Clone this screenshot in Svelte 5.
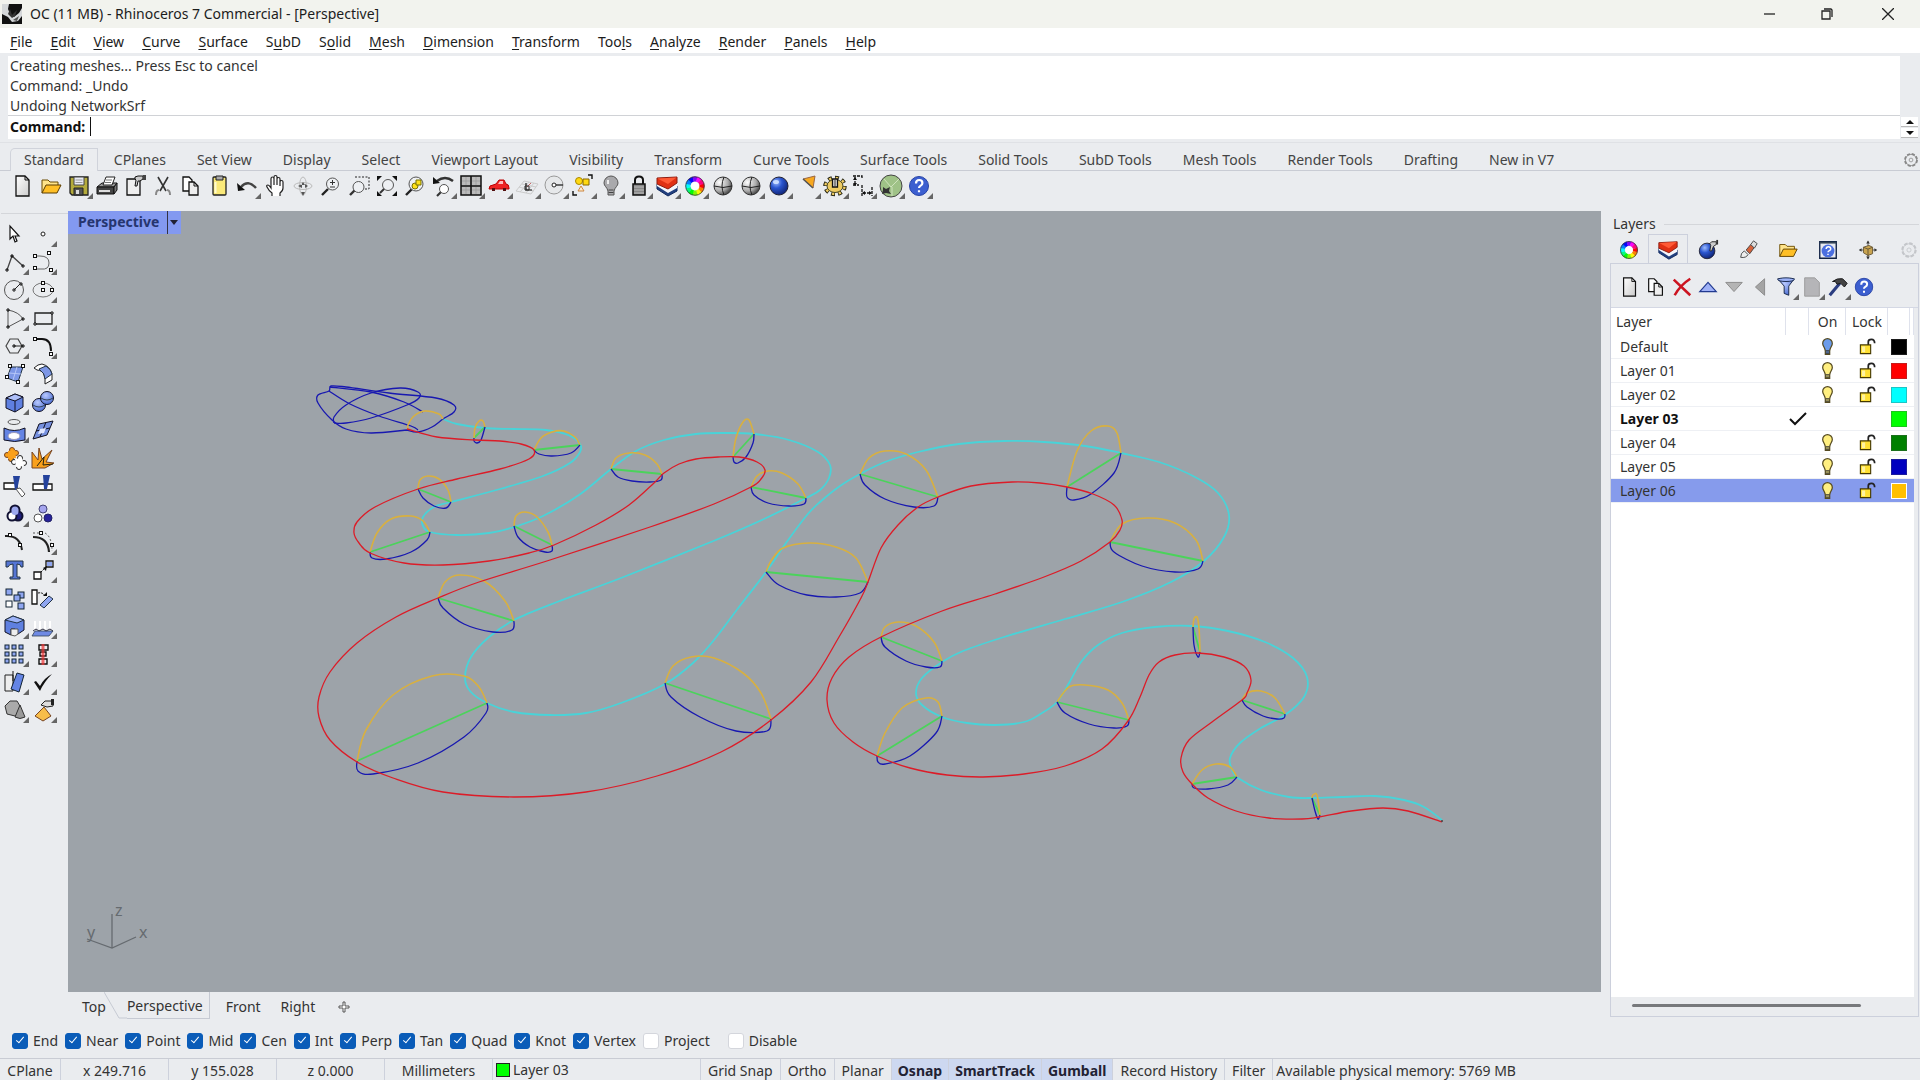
<script lang="ts">
	type Point = [number, number];

	interface Section {
		top: Point[];
		bottom: Point[];
	}

	interface Layer {
		name: string;
		color: string;
		bulb: string | null;
		current?: boolean;
	}

	const menus = [
		['', 'F', 'ile'],
		['', 'E', 'dit'],
		['', 'V', 'iew'],
		['', 'C', 'urve'],
		['', 'S', 'urface'],
		['S', 'u', 'bD'],
		['S', 'o', 'lid'],
		['', 'M', 'esh'],
		['', 'D', 'imension'],
		['', 'T', 'ransform'],
		['Too', 'l', 's'],
		['', 'A', 'nalyze'],
		['', 'R', 'ender'],
		['', 'P', 'anels'],
		['', 'H', 'elp']
	];

	const history = ['Creating meshes... Press Esc to cancel', 'Command: _Undo', 'Undoing NetworkSrf'];

	const toolTabs = [
		'Standard', 'CPlanes', 'Set View', 'Display', 'Select', 'Viewport Layout', 'Visibility', 'Transform',
		'Curve Tools', 'Surface Tools', 'Solid Tools', 'SubD Tools', 'Mesh Tools', 'Render Tools', 'Drafting', 'New in V7'
	];

	// names ending in + carry a flyout corner
	const standardTools = [
		'new', 'open', 'save+', 'print', 'properties', 'cut', 'copy', 'paste', 'undo+', 'pan', 'rotate',
		'zoom', 'zoomWindow', 'zoomExtents', 'zoomSelected', 'zoomUndo+', 'fourViews+', 'car+', 'cplane+',
		'disc+', 'select+', 'bulbGrey+', 'lock+', 'layers+', 'wheel+', 'wireSphere', 'wireSphere+',
		'renderSphere+', 'spot+', 'gear+', 'dims+', 'grass+', 'help+'
	];

	const sideTools = [
		'arrow', 'point+', 'polyline+', 'curve+', 'circle+', 'ellipse+', 'arc+', 'rect+', 'polygon+', 'fillet+',
		'surface+', 'sweep+', 'box+', 'spheres+', 'extrude+', 'patch+', 'puzzle', 'explode', 'trim', 'split',
		'union+', 'group', 'editPts', 'blend+', 'text', 'move+', 'copies', 'rotate2d', 'solidEdit+', 'flow+',
		'array+', 'align+', 'mirror+', 'check+', 'prims+', 'drape+'
	];

	const panelTabs = ['wheel', 'layers', 'renderBall', 'brush', 'open', 'helpBox', 'gumball'];
	const panelTools = ['new', 'copy', 'remove', 'up', 'down', 'back', 'filter', 'sheet', 'hammer', 'help'];

	const layers: Layer[] = [
		{ name: 'Default', color: '#000000', bulb: '#6b9bea' },
		{ name: 'Layer 01', color: '#ff0000', bulb: '#ffef80' },
		{ name: 'Layer 02', color: '#00ffff', bulb: '#ffef80' },
		{ name: 'Layer 03', color: '#00ff00', bulb: null, current: true },
		{ name: 'Layer 04', color: '#008000', bulb: '#ffef80' },
		{ name: 'Layer 05', color: '#0000bf', bulb: '#ffef80' },
		{ name: 'Layer 06', color: '#ffbf00', bulb: '#ffef80' }
	];

	let selected = $state('Layer 06');

	let snaps = $state([
		{ name: 'End', on: true },
		{ name: 'Near', on: true },
		{ name: 'Point', on: true },
		{ name: 'Mid', on: true },
		{ name: 'Cen', on: true },
		{ name: 'Int', on: true },
		{ name: 'Perp', on: true },
		{ name: 'Tan', on: true },
		{ name: 'Quad', on: true },
		{ name: 'Knot', on: true },
		{ name: 'Vertex', on: true },
		{ name: 'Project', on: false },
		{ name: 'Disable', on: false }
	]);

	const modes = [
		{ name: 'Grid Snap', on: false },
		{ name: 'Ortho', on: false },
		{ name: 'Planar', on: false },
		{ name: 'Osnap', on: true },
		{ name: 'SmartTrack', on: true },
		{ name: 'Gumball', on: true },
		{ name: 'Record History', on: false },
		{ name: 'Filter', on: false }
	];

	// Catmull-Rom through the points, written as cubic Beziers
	function smooth(pts: Point[]) {
		let d = `M${pts[0][0]} ${pts[0][1]}`;
		for (let i = 0; i < pts.length - 1; i++) {
			const a = pts[Math.max(i - 1, 0)];
			const b = pts[i];
			const c = pts[i + 1];
			const e = pts[Math.min(i + 2, pts.length - 1)];
			d += `C${b[0] + (c[0] - a[0]) / 6} ${b[1] + (c[1] - a[1]) / 6} ${c[0] - (e[0] - b[0]) / 6} ${c[1] - (e[1] - b[1]) / 6} ${c[0]} ${c[1]}`;
		}
		return d;
	}

	const redRail: Point[] = [
		[407, 429], [437, 437], [475, 440], [500, 441], [521, 444], [534, 450], [529, 459], [500, 469], [457, 479],
		[418, 489], [375, 507], [357, 522], [354, 533], [359, 543], [370, 553], [404, 563], [443, 565], [489, 561],
		[529, 553], [554, 545], [596, 525], [629, 505], [654, 483], [664, 473], [679, 464], [696, 459], [718, 457],
		[739, 457], [757, 462], [765, 470], [761, 479], [751, 487], [714, 504], [650, 527], [550, 560], [479, 582],
		[438, 598], [396, 617], [357, 643], [330, 672], [319, 697], [319, 717], [330, 740], [357, 762], [393, 778],
		[443, 792], [514, 797], [586, 792], [657, 776], [721, 752], [771, 720], [811, 682], [839, 637], [861, 598],
		[868, 582], [881, 548], [898, 525], [918, 507], [938, 497], [971, 486], [1012, 482], [1040, 483], [1067, 487],
		[1093, 494], [1114, 505], [1122, 520], [1120, 530], [1110, 542], [1081, 561], [1044, 577], [995, 594],
		[942, 611], [881, 637], [849, 657], [832, 678], [827, 700], [834, 723], [853, 742], [877, 756], [910, 768],
		[947, 775], [983, 777], [1024, 774], [1065, 766], [1102, 749], [1128, 721], [1140, 697], [1149, 675],
		[1159, 662], [1175, 655], [1198, 653], [1224, 657], [1244, 666], [1251, 680], [1247, 693], [1242, 700],
		[1212, 722], [1189, 740], [1181, 758], [1183, 772], [1192, 784], [1208, 798], [1236, 811], [1269, 818],
		[1302, 819], [1319, 817], [1351, 811], [1383, 808], [1408, 811], [1442, 822]
	];

	const cyanRail: Point[] = [
		[443, 419], [457, 424], [484, 428], [514, 429], [546, 430], [568, 435], [580, 444], [580, 452], [570, 463],
		[543, 476], [500, 489], [451, 502], [434, 507], [423, 517], [423, 526], [430, 532], [457, 535], [489, 533],
		[514, 527], [543, 516], [579, 495], [611, 469], [636, 451], [664, 440], [696, 434], [725, 433], [754, 434],
		[789, 440], [818, 452], [830, 465], [829, 478], [820, 490], [806, 498], [764, 519], [711, 542], [621, 578],
		[557, 602], [514, 620], [489, 637], [471, 657], [465, 677], [470, 691], [487, 703], [514, 712], [550, 715],
		[586, 713], [621, 703], [665, 684], [693, 663], [714, 640], [739, 607], [766, 572], [786, 543], [807, 515],
		[820, 502], [840, 486], [860, 474], [885, 462], [918, 452], [959, 444], [1004, 441], [1044, 442], [1085, 446],
		[1121, 453], [1159, 462], [1195, 477], [1218, 493], [1229, 515], [1224, 537], [1204, 561], [1171, 582],
		[1122, 602], [1065, 619], [1004, 637], [963, 651], [942, 662], [922, 678], [916, 693], [922, 705], [942, 717],
		[967, 723], [995, 725], [1024, 722], [1042, 713], [1057, 702], [1069, 683], [1081, 662], [1098, 645],
		[1122, 633], [1155, 627], [1193, 626], [1228, 631], [1265, 642], [1293, 658], [1307, 677], [1304, 697],
		[1285, 715], [1261, 728], [1240, 743], [1230, 758], [1232, 770], [1238, 778], [1261, 790], [1289, 797],
		[1312, 798], [1342, 797], [1375, 796], [1404, 800], [1424, 807], [1442, 820]
	];

	// each top runs left rail to right rail; each bottom does the same underneath
	const sections: Section[] = [
		{ top: [[474, 438], [475, 428], [479, 421], [483, 421], [485, 427]], bottom: [[474, 438], [474, 441], [477, 443], [481, 440], [485, 427]] },
		{ top: [[534, 450], [541, 438], [552, 432], [564, 431], [575, 437], [580, 445]], bottom: [[534, 450], [539, 454], [552, 456], [571, 453], [580, 445]] },
		{ top: [[418, 489], [420, 480], [428, 476], [439, 479], [448, 490], [451, 502]], bottom: [[418, 489], [423, 498], [434, 506], [446, 508], [451, 502]] },
		{ top: [[370, 552], [377, 533], [391, 519], [411, 516], [423, 521], [430, 532]], bottom: [[370, 552], [372, 558], [386, 559], [411, 552], [427, 540], [430, 532]] },
		{ top: [[514, 526], [516, 516], [525, 512], [537, 517], [548, 532], [552, 545]], bottom: [[514, 526], [518, 537], [530, 547], [545, 552], [552, 551], [552, 545]] },
		{ top: [[611, 469], [616, 458], [629, 453], [645, 455], [657, 464], [662, 474]], bottom: [[611, 469], [618, 477], [632, 481], [650, 482], [661, 480], [662, 474]] },
		{ top: [[733, 457], [736, 438], [743, 422], [749, 420], [754, 434]], bottom: [[733, 457], [734, 462], [738, 463], [746, 457], [753, 443], [754, 434]] },
		{ top: [[751, 487], [757, 476], [768, 471], [782, 473], [798, 484], [806, 498]], bottom: [[751, 487], [754, 495], [768, 503], [789, 506], [804, 504], [806, 498]] },
		{ top: [[438, 598], [445, 582], [459, 575], [484, 581], [505, 601], [514, 621]], bottom: [[438, 598], [443, 608], [464, 624], [493, 632], [512, 630], [514, 621]] },
		{ top: [[357, 761], [366, 730], [393, 695], [432, 676], [464, 676], [479, 687], [487, 703]], bottom: [[357, 761], [358, 771], [373, 774], [418, 763], [464, 737], [486, 713], [487, 703]] },
		{ top: [[665, 683], [673, 666], [691, 657], [714, 658], [743, 673], [761, 693], [771, 719]], bottom: [[665, 683], [671, 697], [700, 717], [736, 731], [767, 731], [771, 719]] },
		{ top: [[766, 572], [771, 561], [783, 548], [809, 543], [836, 547], [856, 558], [868, 582]], bottom: [[766, 572], [779, 585], [807, 595], [836, 597], [860, 593], [868, 582]] },
		{ top: [[860, 474], [869, 458], [885, 451], [906, 454], [926, 470], [938, 497]], bottom: [[860, 474], [865, 485], [885, 499], [914, 507], [934, 506], [938, 497]] },
		{ top: [[1067, 487], [1077, 451], [1091, 431], [1108, 426], [1117, 433], [1121, 453]], bottom: [[1067, 487], [1067, 497], [1074, 500], [1091, 494], [1114, 473], [1121, 453]] },
		{ top: [[1110, 542], [1122, 524], [1147, 518], [1175, 523], [1196, 540], [1203, 561]], bottom: [[1110, 542], [1114, 552], [1142, 566], [1175, 572], [1198, 569], [1203, 561]] },
		{ top: [[881, 637], [885, 627], [898, 622], [916, 626], [934, 642], [942, 661]], bottom: [[881, 637], [885, 647], [906, 661], [926, 667], [940, 667], [942, 661]] },
		{ top: [[877, 756], [885, 733], [902, 708], [926, 698], [938, 702], [942, 716]], bottom: [[877, 756], [878, 762], [885, 764], [910, 756], [936, 733], [942, 716]] },
		{ top: [[1057, 702], [1069, 687], [1085, 685], [1108, 690], [1122, 703], [1129, 720]], bottom: [[1057, 702], [1065, 713], [1089, 724], [1114, 728], [1127, 726], [1129, 720]] },
		{ top: [[1193, 627], [1194, 619], [1197, 617], [1199, 628], [1200, 652]], bottom: [[1193, 627], [1194, 645], [1198, 657], [1200, 652]] },
		{ top: [[1242, 700], [1247, 693], [1261, 691], [1275, 698], [1285, 714]], bottom: [[1242, 700], [1247, 707], [1263, 716], [1277, 719], [1284, 718], [1285, 714]] },
		{ top: [[1192, 784], [1202, 770], [1216, 764], [1230, 767], [1237, 777]], bottom: [[1192, 784], [1194, 788], [1208, 789], [1228, 785], [1237, 777]] },
		{ top: [[1312, 798], [1313, 795], [1317, 795], [1320, 815]], bottom: [[1312, 798], [1315, 811], [1318, 819], [1320, 815]] }
	];

	const head: Point[][] = [
		[[407, 430], [371, 433], [346, 429], [332, 420], [318, 403], [318, 395], [329, 391], [331, 386], [346, 387], [389, 393], [436, 398], [454, 405], [454, 412], [443, 419], [432, 427], [418, 432], [407, 430]],
		[[329, 391], [350, 404], [379, 416], [411, 426], [418, 430]],
		[[334, 423], [334, 417], [346, 405], [371, 393], [400, 388], [418, 392], [419, 398], [407, 405], [371, 418], [346, 423], [334, 423]],
		[[330, 387], [371, 392], [404, 402], [423, 412]]
	];

	const headTop: Point[] = [[408, 429], [408, 425], [414, 416], [425, 411], [439, 414], [443, 419]];

	function colorWheel() {
		let out = '';
		for (let i = 0; i < 12; i++) {
			const a = (i * Math.PI) / 6 - 0.28;
			const b = a + 0.58;
			out += `<path d="M${12 + 7 * Math.cos(a)} ${12 + 7 * Math.sin(a)}A7 7 0 0 1 ${12 + 7 * Math.cos(b)} ${12 + 7 * Math.sin(b)}" stroke="hsl(${i * 30} 95% 50%)" stroke-width="5"/>`;
		}
		return out + '<circle cx="12" cy="12" r="9.3" stroke="#333" stroke-width=".8"/><circle cx="12" cy="12" r="4" fill="#fff"/>';
	}

	function squares(spots: Point[], fill = '#fff') {
		return spots.map(([x, y]) => `<rect x="${x - 1.5}" y="${y - 1.5}" width="3" height="3" fill="${fill}" stroke="#111"/>`).join('');
	}

	function blocks(spots: Point[], size: number, fill = '#8fa6f0') {
		return spots.map(([x, y]) => `<rect x="${x}" y="${y}" width="${size}" height="${size}" fill="${fill}" stroke="#123"/>`).join('');
	}

	const lens = '<path d="M3 21l6-6" stroke="#222" stroke-width="2.4"/><circle cx="13.5" cy="10" r="6" fill="#eef0f3" stroke="#555"/>';
	const ball = '<circle cx="12" cy="12" r="9" fill="url(#gBlue)" stroke="#223"/>';
	const question = '<path d="M9 9.5q0-3.500 3.200-3.500t3.200 3q0 1.700-1.700 2.600t-1.700 2.400M12 16.200v2" stroke="#fff" stroke-width="2.200"/>';
	const bulbShape = 'M12 3a5.500 5.500 0 0 1 5.500 5.500c0 3-2.500 4.500-3 8.500v4h-5v-4c-.5-4-3-5.500-3-8.500A5.500 5.500 0 0 1 12 3z';

	const icons: Record<string, string> = {
		new: '<path d="M5 2h9l4 4v16H5z" fill="url(#gPaper)" stroke="#111" stroke-width="1.300"/><path d="M14 2v4h4" stroke="#111"/>',
		open: '<path d="M3 19V6h6l2 2h8v3" fill="#ffe48a" stroke="#6a4a00"/><path d="M3 19l4-8h15l-4 8z" fill="#ffbf26" stroke="#5a3c00"/>',
		save: '<path d="M3 3h18v18H5l-2-2z" fill="#b4ab3c" stroke="#222" stroke-width="1.300"/><path d="M7 3h10v8H7z" fill="#e8eaf2" stroke="#444"/><path d="M8.500 6h7M8.500 8.500h7" stroke="#999"/><path d="M7 14h9v7H7z" fill="#555" stroke="#222"/><path d="M9 16h3v4H9z" fill="#ddd"/>',
		print: '<path d="M2 13l5-4h15l-3 4z" fill="#999" stroke="#111"/><path d="M2 13h17v7H2z" fill="#444" stroke="#111"/><path d="M19 13l3-4v7l-3 4z" fill="#777" stroke="#111"/><path d="M8 11l3-8h9l-3 8z" fill="#fff" stroke="#222"/><path d="M4 16h11v2H4z" fill="#ddd"/><path d="M11 6h6M10 8.500h6" stroke="#777"/>',
		properties: '<path d="M4 5h13v16H4z" fill="#eee" stroke="#111" stroke-width="1.300"/><path d="M12 3l3-1h5v3l-3 2h-2l-1 5h-2l1-6-1-1z" fill="#ccc" stroke="#111"/><path d="M20 1h3v5h-3z" fill="#444"/>',
		cut: '<path d="M7 3l8 14M17 3L9 17" stroke="#333" stroke-width="1.600"/><path d="M8 16q-3 0-3 5M16 16q3 0 3 5" stroke="#888" stroke-width="2"/>',
		copy: '<path d="M4 3h6l3 3v11H4z" fill="#fff" stroke="#111" stroke-width="1.300"/><path d="M10 8h5l4 4v9h-9z" fill="#eee" stroke="#111" stroke-width="1.300"/><path d="M15 8v4h4" stroke="#111"/>',
		paste: '<rect x="6" y="3" width="13" height="18" rx="1" fill="#fae979" stroke="#222" stroke-width="1.300"/><path d="M9 2h7v4H9z" fill="#aaa" stroke="#222"/><path d="M8.500 8v11" stroke="#fffbd0" stroke-width="2"/>',
		undo: '<path d="M6 13q7-8 15 1" stroke="#444" stroke-width="2.400"/><path d="M2 9l1 8 7-1z" fill="#111"/>',
		pan: '<path d="M9 22v-3q-3-2-5-6-1-2 1-2 1 0 3 3V5q0-2 1.500-2T11 5v6-8q0-1.500 1.500-1.500T14 3v8-6q0-1.500 1.500-1.500T17 5v7-4q0-1.500 1.500-1.500T20 8v6q0 3-3 5v3" fill="#fff" stroke="#222" stroke-width="1.200"/>',
		rotate: '<ellipse cx="12" cy="12" rx="9" ry="3.500" stroke="#bbb"/><ellipse cx="12" cy="12" rx="3.500" ry="9" stroke="#bbb"/><path d="M12 8l-2 3h4zM12 22l-2-4h4zM7 12l4-2v4zM17 12l-3 2v-4z" fill="#555"/>',
		zoom: lens + '<path d="M11 8.500h5M13.500 6v5M11 13h5" stroke="#333"/>',
		zoomWindow: '<path d="M3 21l5-5" stroke="#333" stroke-width="2.400"/><circle cx="11.500" cy="13" r="5.500" fill="#eef0f3" stroke="#555"/><path d="M8 3h14v12h-4" stroke="#222" stroke-dasharray="2 1.500"/>',
		zoomExtents: '<path d="M2 7V2h5zM17 2h5v5zM2 17v5h5zM22 17v5h-5z" fill="#111"/><path d="M5 19l5-5" stroke="#333" stroke-width="2"/><circle cx="13" cy="11" r="5.500" fill="#eef0f3" stroke="#555"/>',
		zoomSelected: '<path d="M3 21l6-6" stroke="#222" stroke-width="2.400"/><circle cx="13" cy="10" r="7" fill="#eef0f3" stroke="#555"/><circle cx="12" cy="12" r="3" fill="#ffe119" stroke="#777000"/><path d="M13 6h5v5h-5z" fill="#ffe119" stroke="#777000"/>',
		zoomUndo: '<path d="M6 7q8-6 16 0" stroke="#333" stroke-width="2.500"/><path d="M2 3v7l7-1z" fill="#111"/><path d="M6 22l4-4" stroke="#333" stroke-width="2.200"/><circle cx="13" cy="15" r="4.500" fill="#fff" stroke="#555"/>',
		fourViews: '<path d="M2 2h20v19H2z" fill="#bbb" stroke="#111" stroke-width="1.500"/><path d="M12 2v19M2 12h20" stroke="#111" stroke-width="1.600"/><path d="M7 3v8M3 7h8M17 3v8M13 7h8M7 13v7M3 16h8M17 13v7M13 16h8" stroke="#999" stroke-width=".7"/>',
		car: '<path d="M2 15q0-4 4-4l3-1 3-4h5l2 4q3 0 3 4v1H2z" fill="#ee2222" stroke="#b00"/><path d="M11 10l2-3h3v3z" fill="#fbb"/><path d="M5 14h3v3H5zM16 14h3v3h-3z" fill="#511"/>',
		cplane: '<path d="M1 17L9 7l14 3-7 10zM4 13l15 4M7 10l14 3M5 18l9-10M11 19l8-10" stroke="#ccc"/><path d="M11 9v7h6" stroke="#111" stroke-width="1.200"/><path d="M12 13l4-4" stroke="#c66"/><path d="M10 12h4v4h-4z" stroke="#333"/>',
		disc: '<circle cx="11" cy="11" r="9" fill="#e6e8ea" stroke="#999"/><circle cx="11" cy="11" r="2" fill="#fff" stroke="#222"/><path d="M13 11h7" stroke="#222" stroke-width="1.300"/>',
		select: '<circle cx="8" cy="7" r="3.500" fill="#ffd911" stroke="#a80"/><path d="M12 5h6v6h-6z" fill="#ffd911" stroke="#860"/><path d="M7 17l3-5 3 5z" fill="#ffeccc" stroke="#c84"/><path d="M17 1h4v4M2 17v4h4" stroke="#111" stroke-width="1.400"/>',
		bulbGrey: '<path d="M12 2a7 7 0 0 1 7 7c0 3-3 4-4 8v4H9v-4c-1-4-4-5-4-8a7 7 0 0 1 7-7z" fill="#a9a9ac" stroke="#555"/><path d="M9.500 16h5M9.500 18.500h5" stroke="#444"/><path d="M9 6v4" stroke="#eee" stroke-width="2"/>',
		lock: '<path d="M8 11V6q0-3.500 4-3.500T16 6v5" stroke="#111" stroke-width="2"/><path d="M6 10h12v11H6z" fill="#888" stroke="#111" stroke-width="1.500"/><path d="M7 13h10M7 16h10M7 19h10" stroke="#bbb"/>',
		layers: '<path d="M2 10v5l11 7 9-5v-5l-9 4z" fill="#22407f" stroke="#112a60"/><path d="M2 9v3l11 7 9-5v-4l-9 5z" fill="#f5f6fb"/><path d="M2 4l20-1v6l-9 6L2 10z" fill="#e03014" stroke="#8c1c10"/><path d="M2.500 4.400l19-1L13 10z" fill="#ff5a36"/>',
		wheel: colorWheel(),
		wireSphere: '<circle cx="12" cy="12" r="9" fill="url(#gGrey)" stroke="#333"/><path d="M3 12q9 3 18 0M13 3q-4 9 0 18" stroke="#222"/>',
		renderSphere: ball + '<ellipse cx="9" cy="8" rx="3" ry="2" fill="#c9dcff"/>',
		renderBall: '<circle cx="11" cy="13" r="8.500" fill="url(#gBlue)" stroke="#223"/><path d="M14 5l2-2h5v3l-3 2-2 5h-2l1-6z" fill="#ccc" stroke="#222"/><path d="M21 1h2v5h-2z" fill="#333"/>',
		spot: '<path d="M8 5l12-3-2 12z" fill="#f7a81e" stroke="#964"/><path d="M8 5l10 9" stroke="#555" stroke-width="1.500"/>',
		gear: '<ellipse cx="12" cy="12" rx="9" ry="7.500" stroke="#221" stroke-width="5.500" stroke-dasharray="3.600 2.850"/><ellipse cx="12" cy="12" rx="9" ry="7.500" stroke="#eecb62" stroke-width="3.500" stroke-dasharray="2.200 4.250" stroke-dashoffset="-.7"/><ellipse cx="12" cy="12" rx="8" ry="6.500" fill="#eecb62" stroke="#442"/><path d="M9.500 5h5v8h-5z" fill="#ddd" stroke="#111" stroke-width="1.300"/><path d="M12 6v6" stroke="#333"/>',
		dims: '<path d="M2 2h9v2M4 3v8M2 11h6M11 11v11M21 13v9M12 19h8" stroke="#111" stroke-dasharray="3 1" stroke-width="1.300"/><path d="M2 6l2-3 2 3zM2 9l2 3 2-3zM14 17l-3 2 3 2zM18 17l3 2-3 2z" fill="#111"/>',
		grass: '<circle cx="12" cy="12" r="11" fill="#9fc287" stroke="#444"/><path d="M12 13l8-8M13 13v9M5 5l7 8" stroke="#cfe3bd"/><path d="M4 13l3 2 4-2-1 4 2 3-5-1-4 1 1-4z" fill="#333"/>',
		help: '<circle cx="12" cy="12" r="9.500" fill="#3c5fd0" stroke="#2743a5"/>' + question,
		arrow: '<path d="M7 4v13l3-3 2 6 2-1-2-5h4z" fill="#fff" stroke="#111" stroke-width="1.200"/>',
		point: '<circle cx="12" cy="12" r="2" fill="#fff" stroke="#222"/>',
		polyline: '<path d="M4 20L9 6l11 10" stroke="#444" stroke-width="1.300"/><path d="M3 19h2v2H3zM8 5h2v2H8zM19 15h2v2h-2z" stroke="#111"/>',
		curve: '<path d="M4 6h5q9 0 9 7t-8 6H4" stroke="#666"/>' + squares([[4, 6], [18, 3], [4, 18], [20, 20]]),
		circle: '<circle cx="11" cy="12" r="9.500" stroke="#555"/><path d="M11 12l6-6" stroke="#222"/><path d="M10 11h2v2h-2zM17 5h2v2h-2z" stroke="#222"/>',
		ellipse: '<ellipse cx="12" cy="12" rx="10" ry="7" stroke="#777"/>' + squares([[12, 12], [21, 12], [12, 5]]),
		arc: '<path d="M5 21V4q11 2 15 9L5 21" stroke="#555"/><path d="M4 3h2v2H4zM19 12h2v2h-2zM4 20h2v2H4z" stroke="#111"/>',
		rect: '<path d="M4 7h17v11H4z" stroke="#222" stroke-width="1.300"/><path d="M3 17h2v2H3zM20 6h2v2h-2z" fill="#fff" stroke="#111"/>',
		polygon: '<path d="M3 12l4-7h8l4 7-4 7H7z" stroke="#444" stroke-width="1.200"/><path d="M11 12h9" stroke="#222"/><path d="M10 11h2v2h-2zM19 11h2v2h-2z" stroke="#111"/>',
		fillet: '<path d="M5 5h6q9 0 9 12" stroke="#111" stroke-width="2"/>' + squares([[4, 5], [20, 20]]),
		surface: '<path d="M8 5h12l-5 15-11-4z" fill="#7d97e6" stroke="#234"/><path d="M14 5l-4 13M6 11l12 1" stroke="#b6c6f8"/>' + squares([[7, 4], [20, 4], [4, 15], [15, 20]]),
		sweep: '<path d="M3 6q4-4 8-4 8 2 10 10v6l-7 4v-7q-2-7-8-7z" fill="#fff" stroke="#222"/><path d="M8 7l7-3q5 3 6 8l-7 5q0-6-6-10z" fill="#7d97e6" stroke="#234"/>',
		box: '<path d="M3 8l9-4 8 3v10l-8 5-9-4z" fill="#5f80e0" stroke="#112"/><path d="M3 8l9 3 8-4-8-3z" fill="#aebff8" stroke="#112"/><path d="M12 11v11" stroke="#112"/>',
		spheres: '<circle cx="8" cy="15" r="6.500" fill="url(#gBlue2)" stroke="#112"/><circle cx="16" cy="8" r="6.500" fill="url(#gBlue2)" stroke="#112"/><path d="M2 15q6 4 12 0M10 8q6 4 12 0" stroke="#345"/>',
		extrude: '<ellipse cx="11" cy="4" rx="6" ry="2.500" stroke="#555"/><path d="M1 10q10 5 21 0v12q-10 3-21 0z" fill="#6484e4" stroke="#112"/><ellipse cx="11" cy="18" rx="6" ry="3.500" fill="#fff" stroke="#99b"/>',
		patch: '<path d="M8 6l14-3-6 14-14 4z" fill="#7590df" stroke="#112"/><path d="M5 13l14-3M15 4L9 19" stroke="#112"/><path d="M9 11l6-1-2 5-6 1z" fill="#dfe6ff"/>',
		puzzle: '<g fill="#f9a01b" stroke="#742"><circle cx="9" cy="4" r="2.500"/><circle cx="4" cy="9" r="2.500"/><circle cx="8" cy="13" r="2.500"/><circle cx="13" cy="7" r="2.500"/></g><path d="M5 5l7-1 1 8-8 1z" fill="#f9a01b"/><g fill="#fff" stroke="#222"><circle cx="17" cy="12" r="2.500"/><circle cx="11" cy="16" r="2.500"/><circle cx="16" cy="21" r="2.500"/><circle cx="21" cy="17" r="2.500"/></g><path d="M12 13l7-1 2 8-8 1z" fill="#fff"/>',
		explode: '<path d="M1 22V6l6 8 1-12 3 11 10-9-6 12 8 1-9 5z" fill="#f9a01b" stroke="#742"/><path d="M6 20l7-9-1 8 10-1" stroke="#221"/>',
		trim: '<path d="M1 9h13v6H1z" fill="#fff" stroke="#111" stroke-width="1.300"/><path d="M10 2h7l-3 14h-2z" fill="#24429c"/><path d="M13 15l4-1 5 6-3 3z" fill="#fff" stroke="#555"/>',
		split: '<path d="M2 10h19v6H2z" fill="#fff" stroke="#111" stroke-width="1.300"/><path d="M12 1h7l-3 14h-3z" fill="#24429c"/>',
		union: '<circle cx="12" cy="8" r="4.500" fill="#9da8ee" stroke="#113" stroke-width="2"/><circle cx="15" cy="14" r="4.500" fill="#201f7c" stroke="#113" stroke-width="2"/><circle cx="9" cy="14" r="4.500" fill="#fff" stroke="#113" stroke-width="2"/><circle cx="12" cy="9.500" r="3.500" fill="#9da8ee"/>',
		group: '<circle cx="12" cy="7" r="4" fill="#a5a5ee" stroke="#447"/><circle cx="7" cy="16" r="4" fill="#fff" stroke="#555"/><circle cx="17" cy="16" r="4" fill="#27229a" stroke="#226"/>',
		editPts: '<path d="M2 6q15-1 17 14" stroke="#222" stroke-width="2"/>' + squares([[7, 5], [17, 15]]),
		blend: '<path d="M2 7q15 0 16 15" stroke="#222" stroke-width="2.200"/><path d="M2 3h12q7 4 7 18" stroke="#555" stroke-dasharray="2 2"/>' + squares([[10, 3], [21, 15]]),
		text: '<path d="M3 3h17v6h-2q0-3-4-3v13h3v2H7v-2h3V6Q6 6 5 9H3z" fill="#5575d4" stroke="#234"/>',
		move: '<path d="M3 14h7v7H3zM15 3h7v6h-7z" fill="#fff" stroke="#111" stroke-width="1.300"/><path d="M16 4h5v4h-5z" fill="#8fa6f0"/><path d="M10 14l5-5" stroke="#111" stroke-dasharray="2 1"/><path d="M16 8l-1 5-3-3z" fill="#111"/>',
		copies: blocks([[3, 3], [15, 6], [11, 9], [15, 17]], 6) + blocks([[3, 15]], 6, '#fff'),
		rotate2d: '<path d="M1 4h5v14H1z" fill="#fff" stroke="#111" stroke-width="1.300"/><path d="M9 19l9-9 4 3-9 9z" fill="#8fa6f0" stroke="#234"/><path d="M7 7q5-1 7 3" stroke="#111" stroke-dasharray="2 1"/><path d="M12 10h4V6z" fill="#111"/>',
		solidEdit: '<path d="M2 6l8-4 11 4v10l-6 4-3-1v-4H8v6l-6-3z" fill="#5f80e0" stroke="#112"/><path d="M2 6l12 3 7-3-11-4z" fill="#9db3f8" stroke="#234"/><path d="M8 15h7v5l-3 2-4-1z" fill="#eee" stroke="#555"/>',
		flow: '<path d="M4 7v8M9 7v8M14 7v8M19 7v8" stroke="#fff" stroke-width="2"/><path d="M4 17h18l-4 5H1z" fill="#6f8ae4" stroke="#345" stroke-width=".8"/><path d="M2 17l3-2 3 2 4-2 3 2 4-2 3 2" stroke="#334"/>',
		array: blocks([[2, 3], [9, 3], [16, 3], [2, 10], [9, 10], [16, 10], [2, 17], [9, 17], [16, 17]], 4),
		align: '<path d="M8 3h9v5H8zM9 10h6v4H9zM8 17h8v5H8z" stroke="#111" stroke-width="1.400"/><path d="M12 2v21" stroke="#e33" stroke-width="3" stroke-opacity=".7"/>',
		mirror: '<path d="M2 5h8v16H2z" fill="#eee" stroke="#222"/><path d="M14 3l7 2-5 17-8-3z" fill="#6484e4" stroke="#123"/><path d="M10 1v10" stroke="#111"/>',
		check: '<path d="M3 12l2-1 4 5q4-8 12-12-8 8-12 17z" fill="#111"/>',
		prims: '<path d="M2 8l5-5h7l3 5v6l-5 4-8-2z" fill="#aaa" stroke="#333"/><path d="M17 7l5 12q-5 3-10 0z" fill="#999" stroke="#333"/>',
		drape: '<path d="M4 18l9-9 7 9-8 5z" fill="#f7bd4a" stroke="#742"/><path d="M10 7l4-4h8v5l-6 1z" fill="#ddd" stroke="#222"/><path d="M20 1h3v6h-3z" fill="#222"/>',
		brush: '<path d="M4 20q0-5 4-7l4 4q-2 4-8 3z" fill="#eee" stroke="#444"/><path d="M10 12l5-6 4 3-5 7z" fill="#d6623a" stroke="#444"/><path d="M15 6l3-4 4 3-3 5z" fill="#ddd" stroke="#444"/>',
		helpBox: '<path d="M3 3h18v18H3z" fill="#e8eaf0" stroke="#124" stroke-width="1.500"/><path d="M3 4h18" stroke="#345" stroke-width="2"/><circle cx="12" cy="13" r="7" fill="#4b6fe0"/><path d="M10 11q0-2.500 2.500-2.500T15 11q0 1-1.500 1.700T12 14.500M12 16v1.500" stroke="#fff" stroke-width="1.600"/>',
		gumball: '<path d="M12 2v20M3 12h18" stroke="#555"/><path d="M12 2l-2 3h4zM12 22l-2-3h4zM2 12l3-2v4zM22 12l-3-2v4z" fill="#333"/><path d="M7 9l6-2 4 2v7l-5 2-5-3z" fill="#c9a450" stroke="#653"/><path d="M7 9l5 2 5-2M12 11v7" stroke="#653"/>',
		cog: '<circle cx="12" cy="12" r="8" stroke-width="2.500" stroke-dasharray="4.200 2.080"/><circle cx="12" cy="12" r="7.500" /><circle cx="12" cy="12" r="2.500"/>',
		remove: '<path d="M3 4l18 17M21 3Q10 10 4 21" stroke="#cc1420" stroke-width="2.800"/>',
		up: '<path d="M3 17l9-10 9 10z" fill="#9fb1f7" stroke="#223a90" stroke-width="1.300"/>',
		down: '<path d="M3 7l9 10 9-10z" fill="#b4b4b4" stroke="#888"/>',
		back: '<path d="M17 3v18L7 12z" fill="#a4a4a4" stroke="#888"/>',
		filter: '<path d="M3 3h18l-6 8v10l-5-2v-8z" fill="url(#gBlue2)" stroke="#124"/><ellipse cx="12" cy="4" rx="9" ry="2" fill="#9db3f8" stroke="#124"/>',
		sheet: '<path d="M4 2h11l5 5v15H4z" fill="#b5b5b8" stroke="#999"/>',
		hammer: '<path d="M3 21L14 8" stroke="#2b3d80" stroke-width="3.400"/><path d="M6 6q5-4 11-3l5 5-3 4-4-4-4 1-2-3z" fill="#444" stroke="#111"/>',
		bulb: `<path d="${bulbShape}" fill="currentColor" stroke="#554a20" stroke-width="1.400"/><path d="M10 17h4M10 19.500h4" stroke="#333" stroke-width="1.400"/>`,
		unlocked: '<path d="M13 11V6q0-3 4-3t4 5" stroke="#222" stroke-width="2.200"/><path d="M3 10h13v11H3z" fill="#ffe033" stroke="#443800" stroke-width="1.400"/><path d="M5 12h4v7H5z" fill="#fff3a0"/>'
	};
</script>

{#snippet icon(name: string, size = 24)}
	<svg width={size} height={size} viewBox="0 0 24 24" fill="none" aria-hidden="true">{@html icons[name]}</svg>
{/snippet}

{#snippet tool(entry: string)}
	<button class="tool" class:more={entry.endsWith('+')} aria-label={entry.replace('+', '')}>
		{@render icon(entry.replace('+', ''))}
	</button>
{/snippet}

<svg class="defs" width="0" height="0" aria-hidden="true">
	<defs>
		<radialGradient id="gBlue" cx=".35" cy=".3" r=".8"><stop offset="0" stop-color="#9dbcff" /><stop offset=".4" stop-color="#2a55cf" /><stop offset="1" stop-color="#0b1c66" /></radialGradient>
		<radialGradient id="gBlue2" cx=".4" cy=".3" r=".8"><stop offset="0" stop-color="#b8c9ff" /><stop offset="1" stop-color="#3f62cc" /></radialGradient>
		<radialGradient id="gGrey" cx=".3" cy=".3" r=".8"><stop offset="0" stop-color="#fff" /><stop offset=".6" stop-color="#aaa" /><stop offset="1" stop-color="#333" /></radialGradient>
		<linearGradient id="gPaper" x1="0" y1="0" x2="1" y2="1"><stop offset="0" stop-color="#fff" /><stop offset="1" stop-color="#ccc" /></linearGradient>
	</defs>
</svg>

<div class="app">
	<header class="title-bar">
		<svg class="logo" width="20" height="20" viewBox="0 0 20 20" aria-hidden="true">
			<rect width="20" height="20" fill="#111" />
			<path d="M0 0h7l-1 5 2 5 4 3 5-4 3-5v8l-4 5-6 1-4-5-6-3z" fill="#d5d8da" />
			<path d="M8 5l2 6 5-5-2 6-3 2-4-4z" fill="#333" />
			<path d="M11 16l6-4-2 5z" fill="#555" />
		</svg>
		<span class="title">OC (11 MB) - Rhinoceros 7 Commercial - [Perspective]</span>
		<button class="win-btn" aria-label="Minimize"><svg width="12" height="12" viewBox="0 0 12 12"><path d="M1 6h11" /></svg></button>
		<button class="win-btn" aria-label="Restore"><svg width="12" height="12" viewBox="0 0 12 12"><path d="M1 3h8v8H1zM3 1h7l1 1v7" /></svg></button>
		<button class="win-btn" aria-label="Close"><svg width="12" height="12" viewBox="0 0 12 12"><path d="M0 0l12 12M12 0L0 12" /></svg></button>
	</header>

	<nav class="menu-bar">
		{#each menus as [before, key, after]}
			<button>{before}<u>{key}</u>{after}</button>
		{/each}
	</nav>

	<section class="command">
		<div class="history">
			{#each history as line}
				<p>{line}</p>
			{/each}
		</div>
		<div class="prompt">
			<label for="command">Command:</label>
			<span class="caret"></span>
			<input id="command" type="text" autocomplete="off" />
			<div class="spin">
				<button aria-label="Previous"></button>
				<button class="next" aria-label="Next"></button>
			</div>
		</div>
	</section>

	<div class="tool-tabs">
		{#each toolTabs as tab, i}
			<button class="tool-tab" class:active={i === 0}>{tab}</button>
		{/each}
		<button class="cog" aria-label="Toolbar options">{@render icon('cog', 18)}</button>
	</div>

	<div class="toolbar">
		{#each standardTools as entry}
			{@render tool(entry)}
		{/each}
	</div>

	<main class="body">
		<aside class="side-tools">
			{#each sideTools as entry}
				{@render tool(entry)}
			{/each}
		</aside>

		<div class="center">
			<div class="viewport">
				<div class="view-title"><span>Perspective</span><button aria-label="Viewport menu"></button></div>
				<svg class="scene" viewBox="68 211 1533 781" preserveAspectRatio="xMinYMin meet" fill="none">
					<path class="cyan" d={smooth(cyanRail)} />
					{#each sections as { top, bottom }}
						<path class="green" d="M{top[0]}L{top[top.length - 1]}" />
						<path class="yellow" d={smooth(top)} />
						<path class="blue" d={smooth(bottom)} />
					{/each}
					{#each head as loop}
						<path class="blue" d={smooth(loop)} />
					{/each}
					<path class="yellow" d={smooth(headTop)} />
					<path class="red" d={smooth(redRail)} />
					<circle cx="1442" cy="821" r="1" fill="#444" />
					<g class="axes">
						<path d="M87 939l25 9 24-11M112 948v-34" />
						<text x="115" y="916">z</text>
						<text x="139" y="938">x</text>
						<text x="87" y="938">y</text>
					</g>
				</svg>
			</div>
			<div class="view-tabs">
				<button>Top</button>
				<svg class="slant" width="23" height="27" viewBox="0 0 23 27" aria-hidden="true"><path d="M0 0l15 26h8" fill="none" stroke="#c6cad3" /></svg>
				<button class="active">Perspective</button>
				<button class="front">Front</button>
				<button>Right</button>
				<button class="add" aria-label="New viewport">
					<svg width="12" height="12" viewBox="0 0 12 12"><path d="M5 1h2v4h4v2H7v4H5V7H1V5h4z" fill="#fff" stroke="#555" /></svg>
				</button>
			</div>
		</div>

		<aside class="panel">
			<div class="panel-title"><span>Layers</span></div>
			<div class="panel-tabs">
				{#each panelTabs as name}
					<button class:active={name === 'layers'} aria-label={name}>{@render icon(name, 22)}</button>
				{/each}
				<button class="cog faint" aria-label="Panel options">{@render icon('cog', 20)}</button>
			</div>
			<div class="panel-box">
				<div class="panel-tools">
					{#each panelTools as name}
						<button class="tool" class:more={['filter', 'sheet', 'hammer'].includes(name)} aria-label={name}>{@render icon(name, 22)}</button>
					{/each}
				</div>
				<div class="table-wrap">
					<table>
						<thead>
							<tr><th class="name">Layer</th><th class="current"></th><th class="on">On</th><th class="locked">Lock</th><th class="color"></th><th class="rest"></th></tr>
						</thead>
						<tbody>
							{#each layers as layer}
								<tr class:current-row={layer.current} class:selected={selected === layer.name} onclick={() => (selected = layer.name)}>
									<td class="name">{layer.name}</td>
									<td>
										{#if layer.current}
											<svg width="18" height="14" viewBox="0 0 18 14"><path d="M1 7l5 5L17 1" fill="none" stroke="#111" stroke-width="2" /></svg>
										{/if}
									</td>
									<td>
										{#if layer.bulb}
											<span class="bulb" style="color: {layer.bulb}">{@render icon('bulb', 21)}</span>
										{/if}
									</td>
									<td>{#if layer.bulb}{@render icon('unlocked', 19)}{/if}</td>
									<td><span class="swatch" style="background: {layer.color}"></span></td>
									<td></td>
								</tr>
							{/each}
						</tbody>
					</table>
				</div>
				<div class="scroll"><div class="thumb"></div></div>
			</div>
		</aside>
	</main>

	<div class="osnap">
		{#each snaps as snap}
			<label><input type="checkbox" bind:checked={snap.on} />{snap.name}</label>
		{/each}
	</div>

	<footer class="status">
		<button class="cplane">CPlane</button>
		<span class="coord">x 249.716</span>
		<span class="coord">y 155.028</span>
		<span class="coord">z 0.000</span>
		<span class="coord">Millimeters</span>
		<button class="layer"><span class="swatch"></span>Layer 03</button>
		{#each modes as mode}
			<button class="mode" class:on={mode.on}>{mode.name}</button>
		{/each}
		<span class="memory">Available physical memory: 5769 MB</span>
	</footer>
</div>

<style>
	:global(body) {
		margin: 0;
		background: #eaecef;
	}

	.defs {
		position: absolute;
	}

	.app {
		display: flex;
		flex-direction: column;
		min-height: 100vh;
		background: #eaecef;
		color: #333;
		font-family: 'Noto Sans', 'Open Sans', sans-serif;
		font-size: 14px;
		line-height: 20px;
	}

	button {
		padding: 0;
		border: none;
		background: none;
		color: inherit;
		font: inherit;
		white-space: nowrap;
	}

	svg {
		display: block;
	}

	.title-bar {
		display: flex;
		align-items: center;
		height: 28px;
		padding-left: 2px;
		background: #f2f3ee;
		color: #1c1c1c;
	}

	.title {
		flex: 1;
		margin-left: 8px;
	}

	.win-btn {
		display: flex;
		align-items: center;
		justify-content: center;
		width: 58px;
		height: 28px;
	}

	.win-btn:last-child {
		width: 64px;
	}

	.win-btn path {
		fill: none;
		stroke: #222;
		stroke-width: 1.3;
	}

	.menu-bar {
		display: flex;
		gap: 18px;
		height: 25px;
		padding: 2px 0 0 10px;
		box-sizing: border-box;
		background: #fff;
		color: #1c1c1c;
	}

	.menu-bar u {
		text-underline-offset: 2px;
	}

	.command {
		padding: 3px 0 3px 8px;
	}

	.history {
		height: 59px;
		margin-right: 20px;
		padding-left: 2px;
		border-bottom: 1px solid #d0d2d6;
		background: #fff;
	}

	.history p {
		margin: 0;
		line-height: 20px;
	}

	.prompt {
		display: flex;
		height: 23px;
		padding-left: 2px;
		background: #fff;
		color: #111;
	}

	.prompt label {
		padding-top: 1px;
		font-weight: 700;
	}

	.caret {
		width: 1px;
		height: 19px;
		margin: 1px 0 0 5px;
		background: #111;
	}

	.prompt input {
		flex: 1;
		min-width: 0;
		border: none;
		outline: none;
		background: none;
		font: inherit;
	}

	.spin {
		display: flex;
		flex-direction: column;
		gap: 1px;
		width: 20px;
		padding-top: 1px;
		background: #eaecef;
	}

	.spin button {
		display: flex;
		align-items: center;
		justify-content: center;
		width: 17px;
		height: 10px;
		margin-left: 1px;
		border-bottom: 1px solid #bbb;
		box-sizing: border-box;
		background: #fff;
	}

	.spin button::before {
		content: '';
		border: 4px solid transparent;
		border-top-width: 0;
		border-bottom-color: #111;
	}

	.spin .next::before {
		border-top: 4px solid #111;
		border-bottom-width: 0;
	}

	.tool-tabs {
		display: flex;
		gap: 1px;
		height: 29px;
		padding: 5px 0 0 10px;
		border-top: 1px solid #dfe1e5;
		box-sizing: border-box;
		box-shadow: inset 0 -1px #c9ccd4;
	}

	.tool-tab {
		padding: 0 15px;
		color: #444;
	}

	.tool-tab.active {
		padding: 0 13px;
		border: 1px solid #d0d3db;
		border-bottom: none;
		border-radius: 5px 0 0 0;
		background: #ebedf0;
	}

	.cog {
		display: flex;
		align-items: center;
		margin-left: auto;
		stroke: #888;
	}

	.faint {
		stroke: #c4c6ca;
	}

	.toolbar {
		display: flex;
		height: 40px;
		padding: 1px 0 0 9px;
		box-sizing: border-box;
	}

	.tool {
		position: relative;
		display: flex;
		align-items: center;
		justify-content: center;
		width: 28px;
		height: 28px;
	}

	.tool.more::after {
		content: '';
		position: absolute;
		right: 0;
		bottom: 1px;
		border-bottom: 6px solid #666;
		border-left: 6px solid transparent;
	}

	.body {
		display: grid;
		flex: 1;
		grid-template-columns: 68px minmax(0, 1fr) 319px;
	}

	.side-tools {
		display: grid;
		grid-template-columns: 28px 28px;
		grid-auto-rows: 28px;
		align-content: start;
		margin: 2px 0 0 1px;
		padding-top: 6px;
		border-top: 1px solid #d4d6da;
	}

	.center {
		display: flex;
		flex-direction: column;
	}

	.viewport {
		position: relative;
		flex: 1;
		background: #9da3a9;
	}

	.scene {
		width: 100%;
	}

	.scene path {
		stroke-width: 1.3;
	}

	.scene .cyan {
		stroke: #49d3d8;
		stroke-width: 1.8;
	}

	.scene .green {
		stroke: #4bd35b;
		stroke-width: 1.8;
	}

	.scene .yellow {
		stroke: #d8b040;
		stroke-width: 1.6;
	}

	.scene .blue {
		stroke: #1818b0;
	}

	.scene .red {
		stroke: #dc1c28;
	}

	.axes path {
		stroke: #666b70;
	}

	.axes text {
		fill: #666b70;
		font-size: 16px;
	}

	.view-title {
		position: absolute;
		top: 0;
		left: 0;
		display: flex;
		height: 23px;
		background: #8399f0;
		color: #26356e;
		font-weight: 700;
	}

	.view-title span {
		padding: 1px 8px 1px 10px;
	}

	.view-title button {
		width: 14px;
		border-left: 1px solid #334;
	}

	.view-title button::before {
		content: '';
		display: block;
		width: 0;
		margin-left: 2px;
		border-top: 5px solid #223;
		border-right: 4px solid transparent;
		border-left: 4px solid transparent;
	}

	.view-tabs {
		display: flex;
		height: 28px;
		padding-left: 14px;
	}

	.view-tabs button {
		height: 27px;
		padding-top: 2px;
		box-sizing: border-box;
	}

	.slant {
		margin-left: -2px;
	}

	.view-tabs .active {
		padding-right: 6px;
		border-right: 1px solid #c6cad3;
		border-bottom: 1px solid #c6cad3;
	}

	.view-tabs .front {
		margin: 0 20px 0 16px;
	}

	.view-tabs .add {
		margin-left: 23px;
	}

	.panel {
		display: flex;
		flex-direction: column;
		margin: 3px 1px 3px 9px;
	}

	.panel-title {
		display: flex;
		align-items: center;
		gap: 8px;
		padding-left: 3px;
	}

	.panel-title::after {
		content: '';
		flex: 1;
		height: 1px;
		background: #d4d6da;
	}

	.panel-tabs {
		display: flex;
		height: 29px;
	}

	.panel-tabs button {
		display: flex;
		align-items: center;
		justify-content: center;
		width: 40px;
		padding-top: 2px;
	}

	.panel-tabs button:first-child {
		width: 38px;
	}

	.panel-tabs button.active {
		border: 1px solid #ccd0dc;
		border-bottom: none;
		box-sizing: border-box;
	}

	.panel-tabs .cog {
		width: 20px;
	}

	.panel-box {
		display: flex;
		flex: 1;
		flex-direction: column;
		border: 1px solid #ccd0dc;
	}

	.panel-tools {
		display: flex;
		align-items: center;
		height: 44px;
		padding: 2px 0 0 6px;
		box-sizing: border-box;
		border-bottom: 1px solid #d4d8e4;
	}

	.panel-tools .tool {
		width: 26px;
	}

	.table-wrap {
		flex: 1;
		margin-right: 4px;
		background: #fff;
	}

	table {
		width: 100%;
		border-collapse: collapse;
		table-layout: fixed;
	}

	th {
		height: 26px;
		padding: 1px 0 0;
		box-shadow: inset -1px 0 #dfe2ec;
		font-weight: 400;
	}

	th.name {
		padding-left: 5px;
		text-align: left;
	}

	th.current {
		width: 23px;
	}

	th.on {
		width: 37px;
	}

	th.locked {
		width: 42px;
	}

	th.color {
		width: 22px;
	}

	th.rest {
		width: 4px;
	}

	td {
		height: 23px;
		padding: 0;
		border-bottom: 1px solid #eef0f4;
	}

	td.name {
		padding-left: 9px;
	}

	td svg {
		margin: 0 auto;
	}

	.current-row {
		color: #111;
		font-weight: 700;
	}

	.selected {
		background: #869bec;
	}

	td .swatch {
		display: block;
		width: 16px;
		height: 16px;
		margin: 0 auto;
		outline: 1px solid #5555;
		outline-offset: -1px;
	}

	.selected .swatch {
		outline-color: #fff;
	}

	.scroll {
		height: 19px;
		padding: 7px 57px 0 21px;
		box-sizing: border-box;
	}

	.thumb {
		height: 3px;
		border-radius: 2px;
		background: #77797c;
	}

	.osnap {
		display: flex;
		align-items: center;
		gap: 7px;
		height: 38px;
		padding: 3px 0 0 12px;
		box-sizing: border-box;
	}

	.osnap label {
		display: flex;
		align-items: center;
		gap: 5px;
	}

	.osnap label:last-child {
		margin-left: 11px;
	}

	.osnap input {
		width: 16px;
		height: 16px;
		margin: 0;
		border: 1px solid #d4d6dc;
		border-radius: 3px;
		box-sizing: border-box;
		appearance: none;
		background: #fff;
	}

	.osnap input:checked {
		border-color: #0a5cb8;
		background: #0a5cb8;
	}

	.osnap input:checked::before {
		content: '';
		display: block;
		width: 3px;
		height: 7px;
		margin: 1px 0 0 5px;
		border: solid #fff;
		border-width: 0 1px 1px 0;
		transform: rotate(40deg);
	}

	.status {
		display: flex;
		height: 23px;
		border-top: 1px solid #c9ccd4;
		box-sizing: border-box;
		line-height: 24px;
	}

	.status > * {
		border-right: 1px solid #cdd1dc;
		box-sizing: border-box;
	}

	.cplane {
		width: 61px;
	}

	.coord {
		width: 108px;
		text-align: center;
	}

	.layer {
		display: flex;
		align-items: center;
		gap: 3px;
		width: 208px;
		padding-left: 3px;
	}

	.layer .swatch {
		width: 14px;
		height: 14px;
		border: 1px solid #222;
		box-sizing: border-box;
		background: #0f0;
	}

	.mode {
		padding: 0 7px;
	}

	.mode.on {
		padding: 0 6px;
		background: #cdd8f0;
		color: #223;
		font-weight: 700;
	}

	.status .memory {
		padding-left: 3px;
		border: none;
	}
</style>
